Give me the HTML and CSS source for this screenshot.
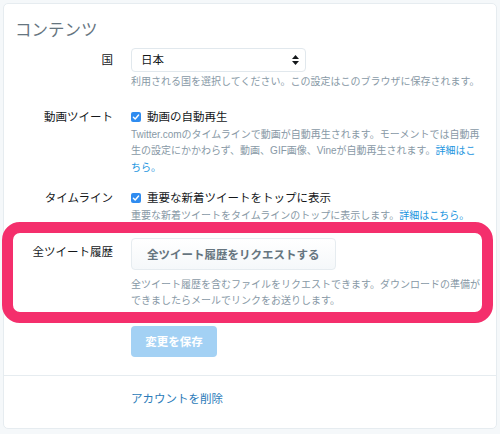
FILE: index.html
```html
<!DOCTYPE html>
<html lang="ja">
<head>
  <meta charset="UTF-8" />
  <meta name="viewport" content="width=device-width, initial-scale=1.0"/>
  <title>設定 - コンテンツ</title>
  <link rel="stylesheet" href="styles.css">
</head>
<body>

  <div class="card">
    <section class="section">
      <h2 class="section-title">コンテンツ</h2>

      <div class="row row-country">
        <label class="row-label">国</label>
        <div class="row-body">
          <div class="select">
            <span>日本</span>
            <svg class="select-arrows" width="7" height="10" viewBox="0 0 7 10">
              <path d="M3.5 0 L7 4 L0 4 Z M3.5 10 L7 6 L0 6 Z" fill="#14171a"/>
            </svg>
          </div>
          <p class="help">利用される国を選択してください。この設定はこのブラウザに保存されます。</p>
        </div>
      </div>

      <div class="row row-video">
        <label class="row-label">動画ツイート</label>
        <div class="row-body">
          <div class="check">
            <svg class="checkbox" width="10" height="10" viewBox="0 0 10 10">
              <rect width="10" height="10" rx="2" fill="#2f8cf0"/>
              <path d="M2.4 5.2 L4.2 7 L7.6 3" fill="none" stroke="#fff" stroke-width="1.4" stroke-linecap="round" stroke-linejoin="round"/>
            </svg>
            <span>動画の自動再生</span>
          </div>
          <p class="help">Twitter.comのタイムラインで動画が自動再生されます。モーメントでは自動再<br>生の設定にかかわらず、動画、GIF画像、Vineが自動再生されます。<a href="#">詳細はこ<br>ちら。</a></p>
        </div>
      </div>

      <div class="row row-timeline">
        <label class="row-label">タイムライン</label>
        <div class="row-body">
          <div class="check">
            <svg class="checkbox" width="10" height="10" viewBox="0 0 10 10">
              <rect width="10" height="10" rx="2" fill="#2f8cf0"/>
              <path d="M2.4 5.2 L4.2 7 L7.6 3" fill="none" stroke="#fff" stroke-width="1.4" stroke-linecap="round" stroke-linejoin="round"/>
            </svg>
            <span>重要な新着ツイートをトップに表示</span>
          </div>
          <p class="help">重要な新着ツイートをタイムラインのトップに表示します。<a href="#">詳細はこちら。</a></p>
        </div>
      </div>

      <div class="row row-archive">
        <label class="row-label">全ツイート履歴</label>
        <div class="row-body">
          <button class="btn">全ツイート履歴をリクエストする</button>
          <p class="help">全ツイート履歴を含むファイルをリクエストできます。ダウンロードの準備が<br>できましたらメールでリンクをお送りします。</p>
        </div>
        <div class="highlight"></div>
      </div>

      <div class="row row-save">
        <span class="row-label"></span>
        <div class="row-body">
          <button class="btn-save">変更を保存</button>
        </div>
      </div>
    </section>

    <section class="section section-danger">
      <div class="row">
        <span class="row-label"></span>
        <div class="row-body">
          <a class="link-delete" href="#">アカウントを削除</a>
        </div>
      </div>
    </section>
  </div>

</body>
</html>
```

FILE: styles.css
```css
body {
  margin: 0;
  background: #f5f8fa;
  font-family: "Liberation Sans", "Noto Sans CJK JP", sans-serif;
  color: #14171a;
}

.card {
  margin: 3px;
  background: #fff;
  border: 1px solid #e6ecf0;
  border-radius: 5px;
}

.section {
  padding: 16px 8px 18px 0;
  border-bottom: 1px solid #e6ecf0;
}

.section-danger {
  padding: 13px 8px 19px 0;
  border-bottom: none;
}

.section-title {
  margin: 0 0 8px 11px;
  font-size: 16.5px;
  line-height: 20px;
  font-weight: normal;
  color: #66757f;
}

.row {
  display: flex;
}

.row-label {
  width: 109px;
  flex: none;
  margin-right: 18px;
  text-align: right;
  font-size: 11.5px;
  line-height: 20px;
}

.row-body {
  flex: 1;
  font-size: 11.5px;
  line-height: 20px;
}

.help {
  margin: 0;
  font-size: 10px;
  line-height: 16.5px;
  color: #8899a6;
}

.help a {
  color: #1b95e0;
  text-decoration: none;
}

/* 国 */
.row-country .row-label {
  line-height: 24px;
}

.select {
  width: 175px;
  height: 24px;
  box-sizing: border-box;
  border: 1px solid #e1e8ed;
  border-radius: 4px;
  padding: 0 6px 0 9px;
  display: flex;
  align-items: center;
  justify-content: space-between;
}

.row-country .help {
  margin-top: 2px;
}

.row-video {
  margin-top: 16px;
}

.row-timeline {
  margin-top: 12px;
}

.check {
  display: flex;
  align-items: center;
  gap: 6px;
}

.checkbox {
  flex: none;
}

/* 全ツイート履歴 */
.row-archive {
  position: relative;
  margin-top: 13px;
}

.row-archive .row-label {
  padding-top: 4px;
}

.btn {
  height: 32px;
  padding: 0 15px;
  font-family: inherit;
  font-size: 11.5px;
  font-weight: bold;
  color: #66757f;
  background: linear-gradient(#fff, #f5f8fa);
  border: 1px solid #e6ecf0;
  border-radius: 4px;
}

.row-archive .help {
  margin-top: 7px;
}

.highlight {
  position: absolute;
  top: -16px;
  bottom: -13px;
  left: -2px;
  right: -5px;
  border: 11px solid #f42f6c;
  border-radius: 18px;
  pointer-events: none;
}

.row-save {
  margin-top: 16px;
}

.btn-save {
  width: 86px;
  height: 31px;
  font-family: inherit;
  font-size: 11.5px;
  font-weight: bold;
  color: #fff;
  background: #a3d1f4;
  border: none;
  border-radius: 4px;
}

.link-delete {
  color: #2b7bb9;
  text-decoration: none;
}
```
